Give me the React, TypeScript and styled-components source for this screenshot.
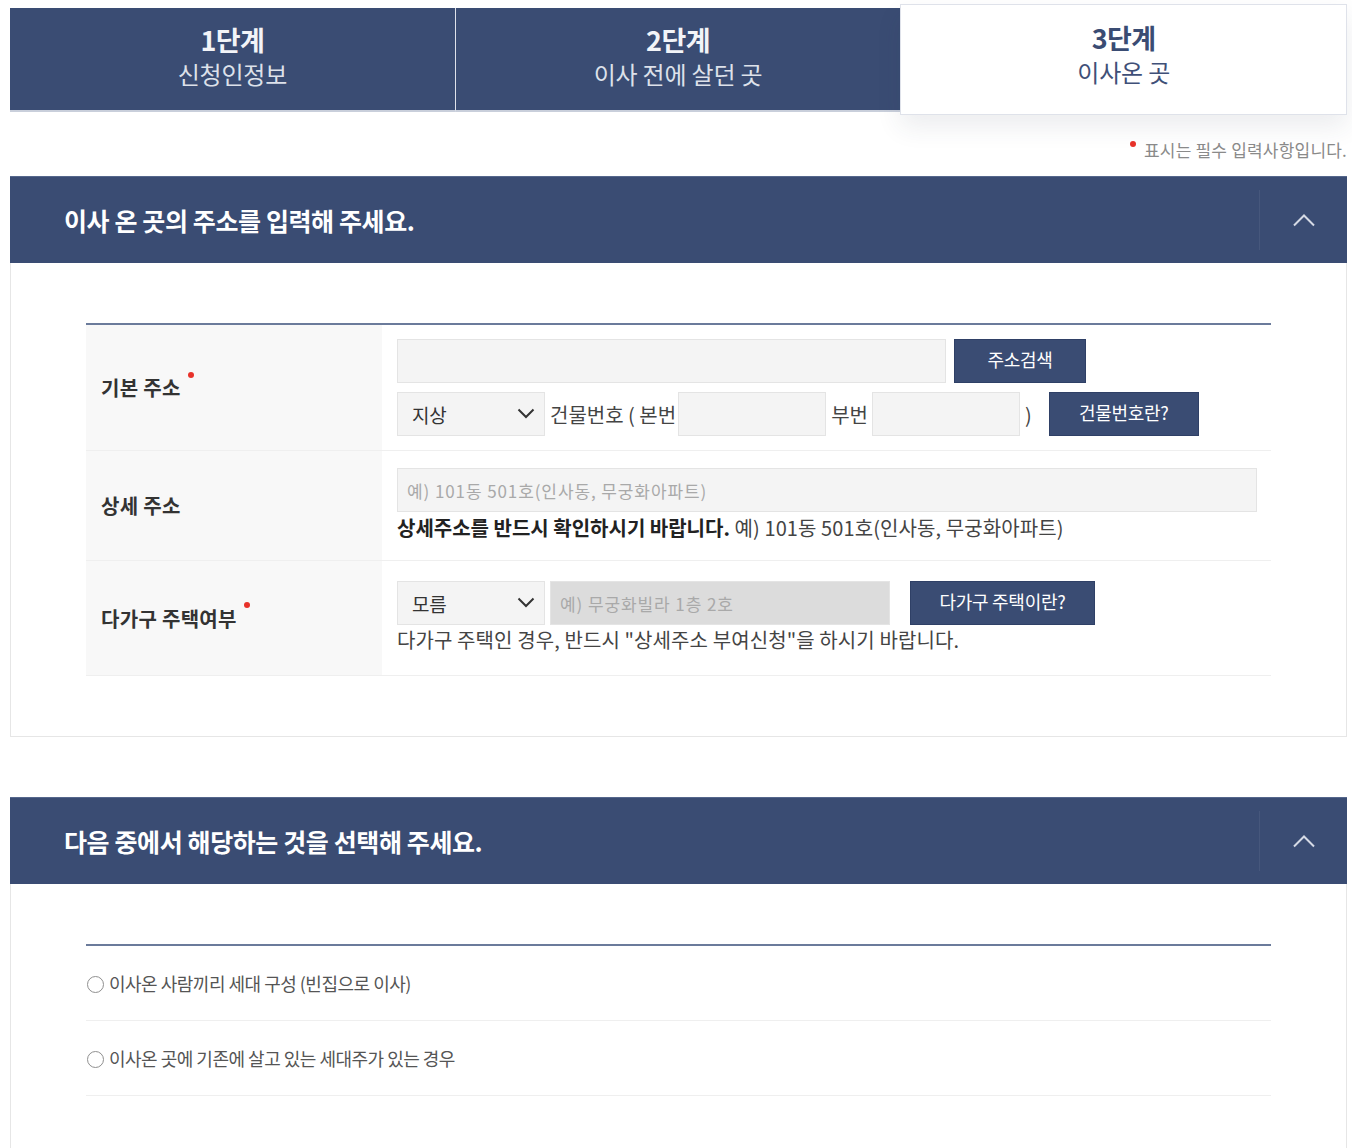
import React from 'react';
import styled, { createGlobalStyle } from 'styled-components';

const NAVY = '#3a4c73';

const GlobalStyle = createGlobalStyle`
	* {
		box-sizing: border-box;
	}

	body {
		margin: 0;
		background: #fff;
		font-family: 'Noto Sans CJK KR', 'Noto Sans', sans-serif;
		color: #333;
	}
`;

const Page = styled.div`
	padding: 8px 5px 0 10px;
`;

const Steps = styled.ol`
	display: flex;
	align-items: flex-start;
	margin: 0;
	padding: 0;
	list-style: none;
`;

const Step = styled.li<{ active?: boolean }>`
	position: relative;
	flex: 1;
	display: flex;
	flex-direction: column;
	align-items: center;
	padding-top: ${({ active }) => (active ? '16px' : '15px')};
	height: ${({ active }) => (active ? '111px' : '104px')};
	margin-top: ${({ active }) => (active ? '-4px' : '0')};
	background: ${({ active }) => (active ? '#fff' : NAVY)};
	border: ${({ active }) => (active ? '1px solid #dfe2ea' : 'none')};
	border-bottom: ${({ active }) =>
		active ? '1px solid #dfe2ea' : '2px solid #c9cfdb'};
	box-shadow: ${({ active }) =>
		active ? '0 12px 24px rgba(40, 50, 80, 0.09)' : 'none'};
	z-index: ${({ active }) => (active ? 1 : 0)};

	& + & {
		border-left: ${({ active }) =>
			active ? '1px solid #dfe2ea' : '1px solid #44567c'};
	}
`;

const StepNo = styled.span<{ active?: boolean }>`
	font-size: 27px;
	line-height: 34px;
	font-weight: 700;
	letter-spacing: -0.6px;
	color: ${({ active }) => (active ? NAVY : '#f2f4f8')};
`;

const StepName = styled.span<{ active?: boolean }>`
	font-size: 24px;
	line-height: 34px;
	letter-spacing: -0.2px;
	color: ${({ active }) => (active ? '#3f5078' : '#dde1ea')};
`;

const RequiredNote = styled.p`
	margin: 23px 0 14px;
	text-align: right;
	font-size: 17px;
	line-height: 24px;
	letter-spacing: 0.2px;
	color: #8a8a8a;
`;

const Dot = styled.span`
	display: inline-block;
	width: 6px;
	height: 6px;
	margin-right: 8px;
	border-radius: 50%;
	background: #e8322a;
	vertical-align: 10px;
`;

const Panel = styled.section`
	& + & {
		margin-top: 60px;
	}
`;

const PanelHead = styled.header`
	display: flex;
	align-items: center;
	justify-content: space-between;
	height: 87px;
	padding-left: 54px;
	background: ${NAVY};
	border-top: 1px solid #55678c;
`;

const PanelTitle = styled.h2`
	margin: 0;
	font-size: 25px;
	font-weight: 700;
	letter-spacing: -0.4px;
	color: #fff;
`;

const Toggle = styled.button`
	display: flex;
	align-items: center;
	justify-content: center;
	width: 88px;
	height: 60px;
	padding: 0;
	border: none;
	border-left: 1px solid #46577c;
	background: transparent;
	color: #d5dae5;
	cursor: pointer;
`;

const PanelBody = styled.div<{ bottom: number }>`
	padding: 60px 75px ${({ bottom }) => bottom}px 75px;
	border: 1px solid #e6e6e6;
	border-top: none;
`;

const FormTable = styled.div`
	border-top: 2px solid #6b7b9b;
`;

const Row = styled.div<{ h: number }>`
	display: grid;
	grid-template-columns: 296px 1fr;
	min-height: ${({ h }) => h}px;
	border-bottom: 1px solid #efefef;
`;

const Label = styled.div`
	display: flex;
	align-items: center;
	padding-left: 15px;
	background: #f8f8f8;
	font-size: 20px;
	font-weight: 700;
	letter-spacing: 0.3px;
	color: #333;
`;

const LabelDot = styled.span`
	display: inline-block;
	width: 6px;
	height: 6px;
	margin-left: 7px;
	border-radius: 50%;
	background: #e8322a;
	align-self: center;
	transform: translateY(-13px);
`;

const Cell = styled.div`
	display: flex;
	flex-direction: column;
	justify-content: center;
	gap: 9px;
	padding: 0 14px 0 15px;
`;

const Line = styled.div`
	display: flex;
	align-items: center;
`;

const TextInput = styled.input<{ w?: number; disabledLook?: boolean }>`
	width: ${({ w }) => (w ? `${w}px` : '100%')};
	height: 44px;
	padding: 0 9px;
	border: 1px solid #e4e4e4;
	background: ${({ disabledLook }) => (disabledLook ? '#dcdcdc' : '#f4f4f4')};
	font-family: 'Noto Sans CJK KR', sans-serif;
	font-size: 17px;
	letter-spacing: 0.9px;
	color: #333;
	outline: none;

	&::placeholder {
		color: #a9a9a9;
	}
`;

const SelectBox = styled.div`
	position: relative;
	width: 148px;
	height: 44px;
	flex-shrink: 0;
`;

const Select = styled.select`
	width: 100%;
	height: 100%;
	padding: 0 0 0 14px;
	border: 1px solid #e4e4e4;
	background: #f4f4f4;
	appearance: none;
	font-family: 'Noto Sans CJK KR', sans-serif;
	font-size: 19px;
	letter-spacing: -0.3px;
	color: #333;
	outline: none;
`;

const SelectArrow = styled.svg`
	position: absolute;
	top: 16px;
	right: 10px;
	pointer-events: none;
`;

const Btn = styled.button<{ w: number; gapLeft: number }>`
	flex-shrink: 0;
	width: ${({ w }) => w}px;
	height: 44px;
	margin-left: ${({ gapLeft }) => gapLeft}px;
	border: 1px solid #2f4066;
	background: ${NAVY};
	font-family: 'Noto Sans CJK KR', sans-serif;
	font-size: 18px;
	letter-spacing: -0.3px;
	color: #fff;
	cursor: pointer;
	padding: 0 0 4px;
`;

const Inline = styled.span<{ l: number; r: number }>`
	margin: 0 ${({ r }) => r}px 0 ${({ l }) => l}px;
	font-size: 20px;
	letter-spacing: 0;
	color: #444;
	white-space: nowrap;
`;

const Help = styled.p`
	margin: 0;
	font-size: 20px;
	line-height: 30px;
	letter-spacing: 0.1px;
	color: #444;

	strong {
		color: #222;
		font-weight: 700;
		letter-spacing: 0;
	}
`;

const OptionRow = styled.label`
	display: flex;
	align-items: center;
	height: 75px;
	border-bottom: 1px solid #efefef;
	font-size: 18px;
	letter-spacing: -0.5px;
	color: #555;
	cursor: pointer;
`;

const Radio = styled.input`
	appearance: none;
	width: 17px;
	height: 17px;
	margin: 2px 5px 0 1px;
	border: 1.5px solid #8f8f8f;
	border-radius: 50%;
	background: #fff;
`;

const ChevronUp = () => (
	<svg width="24" height="14" viewBox="0 0 24 14" fill="none">
		<polyline
			points="2,12.5 12,2.5 22,12.5"
			stroke="currentColor"
			strokeWidth="2"
		/>
	</svg>
);

const DropDown = ({ value }: { value: string }) => (
	<SelectBox>
		<Select defaultValue={value}>
			<option>{value}</option>
		</Select>
		<SelectArrow width="18" height="11" viewBox="0 0 18 11" fill="none">
			<polyline
				points="1.5,1.5 9,9 16.5,1.5"
				stroke="#333"
				strokeWidth="2"
			/>
		</SelectArrow>
	</SelectBox>
);

const steps = [
	{ no: '1단계', name: '신청인정보' },
	{ no: '2단계', name: '이사 전에 살던 곳' },
	{ no: '3단계', name: '이사온 곳' },
];

export default function App() {
	return (
		<Page>
			<GlobalStyle />
			<Steps>
				{steps.map((s, i) => (
					<Step key={s.no} active={i === 2}>
						<StepNo active={i === 2}>{s.no}</StepNo>
						<StepName active={i === 2}>{s.name}</StepName>
					</Step>
				))}
			</Steps>

			<RequiredNote>
				<Dot />
				표시는 필수 입력사항입니다.
			</RequiredNote>

			<Panel>
				<PanelHead>
					<PanelTitle>이사 온 곳의 주소를 입력해 주세요.</PanelTitle>
					<Toggle aria-label="접기">
						<ChevronUp />
					</Toggle>
				</PanelHead>
				<PanelBody bottom={60}>
					<FormTable>
						<Row h={126}>
							<Label>
								기본 주소
								<LabelDot />
							</Label>
							<Cell>
								<Line>
									<TextInput w={549} />
									<Btn w={132} gapLeft={8}>
										주소검색
									</Btn>
								</Line>
								<Line>
									<DropDown value="지상" />
									<Inline l={5} r={2}>
										건물번호 ( 본번
									</Inline>
									<TextInput w={148} />
									<Inline l={5} r={4}>
										부번
									</Inline>
									<TextInput w={148} />
									<Inline l={5} r={0}>
										)
									</Inline>
									<Btn w={150} gapLeft={17}>
										건물번호란?
									</Btn>
								</Line>
							</Cell>
						</Row>
						<Row h={110}>
							<Label>상세 주소</Label>
							<Cell>
								<TextInput placeholder="예) 101동 501호(인사동, 무궁화아파트)" />
								<Help style={{ marginTop: -8 }}>
									<strong>상세주소를 반드시 확인하시기 바랍니다.</strong> 예) 101동
									501호(인사동, 무궁화아파트)
								</Help>
							</Cell>
						</Row>
						<Row h={115}>
							<Label>
								다가구 주택여부
								<LabelDot />
							</Label>
							<Cell>
								<Line>
									<DropDown value="모름" />
									<TextInput
										w={340}
										disabledLook
										disabled
										placeholder="예) 무궁화빌라 1층 2호"
										style={{ marginLeft: 5 }}
									/>
									<Btn w={185} gapLeft={20}>
										다가구 주택이란?
									</Btn>
								</Line>
								<Help style={{ marginTop: -9 }}>
									다가구 주택인 경우, 반드시 "상세주소 부여신청"을 하시기 바랍니다.
								</Help>
							</Cell>
						</Row>
					</FormTable>
				</PanelBody>
			</Panel>

			<Panel>
				<PanelHead>
					<PanelTitle>다음 중에서 해당하는 것을 선택해 주세요.</PanelTitle>
					<Toggle aria-label="접기">
						<ChevronUp />
					</Toggle>
				</PanelHead>
				<PanelBody bottom={60}>
					<FormTable>
						<OptionRow>
							<Radio type="radio" name="household" />
							이사온 사람끼리 세대 구성 (빈집으로 이사)
						</OptionRow>
						<OptionRow>
							<Radio type="radio" name="household" />
							이사온 곳에 기존에 살고 있는 세대주가 있는 경우
						</OptionRow>
					</FormTable>
				</PanelBody>
			</Panel>
		</Page>
	);
}
